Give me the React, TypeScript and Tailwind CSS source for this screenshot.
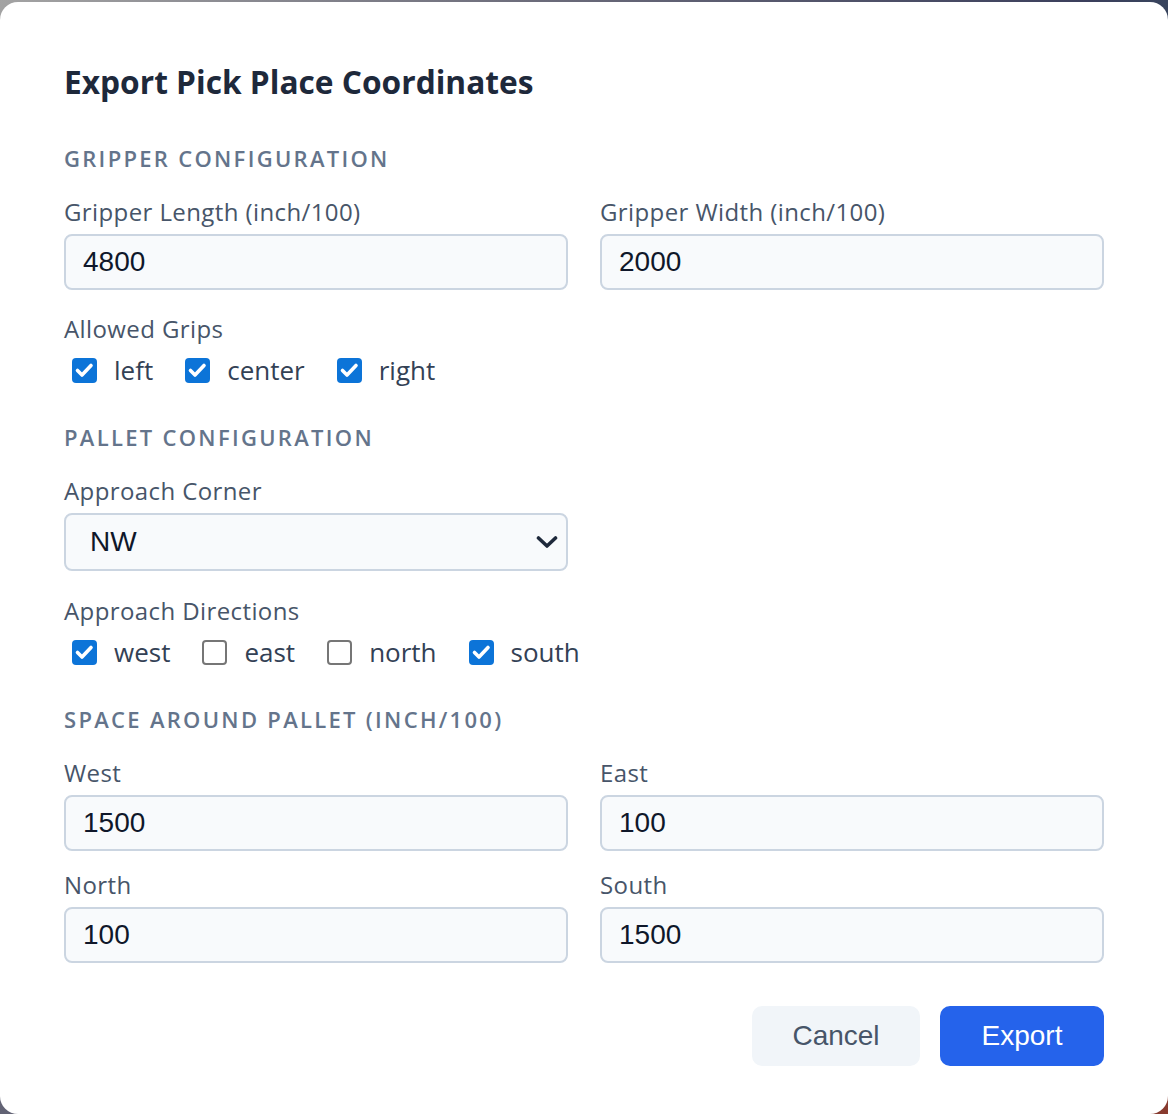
import React from "react";

function Check({ checked }: { checked: boolean }) {
  if (checked) {
    return (
      <span className="ml-[8px] flex h-[25px] w-[25px] items-center justify-center rounded-[4px] bg-[#0c74d8]">
        <svg width="25" height="25" viewBox="0 0 25 25" fill="none">
          <path d="M5.5 12.5 L10 17 L19 7.5" stroke="white" strokeWidth="3.6" strokeLinecap="round" strokeLinejoin="round" />
        </svg>
      </span>
    );
  }
  return <span className="ml-[8px] h-[25px] w-[25px] rounded-[4px] border-2 border-[#767676] bg-white" />;
}

function CheckItem({ label, checked }: { label: string; checked: boolean }) {
  return (
    <div className="flex items-center gap-[17px]">
      <Check checked={checked} />
      <span className="text-[26px] leading-[34px] text-[#334155] font-['Open_Sans',sans-serif]">{label}</span>
    </div>
  );
}

function Label({ children, className = "" }: { children: React.ReactNode; className?: string }) {
  return (
    <div className={"text-[24px] leading-[30px] tracking-[0.4px] text-[#475569] font-['Open_Sans',sans-serif] " + className}>
      {children}
    </div>
  );
}

function Heading({ children, className = "" }: { children: React.ReactNode; className?: string }) {
  return (
    <div
      className={
        "text-[22px] leading-[30px] font-semibold uppercase tracking-[2.3px] text-[#64748b] font-['Open_Sans',sans-serif] " +
        className
      }
    >
      {children}
    </div>
  );
}

function Input({ value }: { value: string }) {
  return (
    <div className="mt-[7px] flex h-[56px] items-center rounded-[8px] border-2 border-[#cbd5e1] bg-[#f8fafc] pl-[17px] text-[28px] text-[#0f172a] font-['Liberation_Sans',Arial,sans-serif]">
      {value}
    </div>
  );
}

export default function App() {
  return (
    <div className="h-[1114px] w-[1168px] overflow-hidden bg-[linear-gradient(120deg,#a3a3a3_0%,#6b6b7a_30%,#3b3f5c_60%,#2f5560_80%,#8a3a2e_100%)] pt-[2px]">
      <div className="h-[1112px] w-full rounded-[18px] bg-white px-[64px] pt-[60px]">
        <h1 className="text-[31.7px] leading-[40px] font-bold text-[#1e293b] font-['Open_Sans',sans-serif]">
          Export Pick Place Coordinates
        </h1>

        <Heading className="mt-[41px]">Gripper Configuration</Heading>
        <div className="mt-[24px] grid grid-cols-2 gap-x-[32px]">
          <div>
            <Label>Gripper Length (inch/100)</Label>
            <Input value="4800" />
          </div>
          <div>
            <Label>Gripper Width (inch/100)</Label>
            <Input value="2000" />
          </div>
        </div>

        <Label className="mt-[24px]">Allowed Grips</Label>
        <div className="mt-[9px] flex gap-[24px]">
          <CheckItem label="left" checked />
          <CheckItem label="center" checked />
          <CheckItem label="right" checked />
        </div>

        <Heading className="mt-[35px]">Pallet Configuration</Heading>
        <Label className="mt-[24px]">Approach Corner</Label>
        <div className="mt-[7px] grid grid-cols-2 gap-x-[32px]">
          <div className="flex h-[58px] items-center justify-between rounded-[8px] border-2 border-[#cbd5e1] bg-[#f8fafc] pl-[24px] pr-[8px] text-[28px] text-[#0f172a] font-['Liberation_Sans',Arial,sans-serif]">
            <span>NW</span>
            <svg width="22" height="12" viewBox="0 0 22 12" fill="none">
              <path d="M2.5 2 L11 10 L19.5 2" stroke="#1e293b" strokeWidth="3.6" strokeLinecap="round" strokeLinejoin="round" />
            </svg>
          </div>
        </div>

        <Label className="mt-[25px]">Approach Directions</Label>
        <div className="mt-[9px] flex gap-[24px]">
          <CheckItem label="west" checked />
          <CheckItem label="east" checked={false} />
          <CheckItem label="north" checked={false} />
          <CheckItem label="south" checked />
        </div>

        <Heading className="mt-[35px]">Space Around Pallet (inch/100)</Heading>
        <div className="mt-[24px] grid grid-cols-2 gap-x-[32px] gap-y-[19px]">
          <div>
            <Label>West</Label>
            <Input value="1500" />
          </div>
          <div>
            <Label>East</Label>
            <Input value="100" />
          </div>
          <div>
            <Label>North</Label>
            <Input value="100" />
          </div>
          <div>
            <Label>South</Label>
            <Input value="1500" />
          </div>
        </div>

        <div className="mt-[43px] flex justify-end gap-[20px] font-['Liberation_Sans',Arial,sans-serif] text-[28px]">
          <button className="h-[60px] w-[168px] rounded-[10px] bg-[#f1f5f9] text-[#475569]">Cancel</button>
          <button className="h-[60px] w-[164px] rounded-[10px] bg-[#2563eb] text-white">Export</button>
        </div>
      </div>
    </div>
  );
}
